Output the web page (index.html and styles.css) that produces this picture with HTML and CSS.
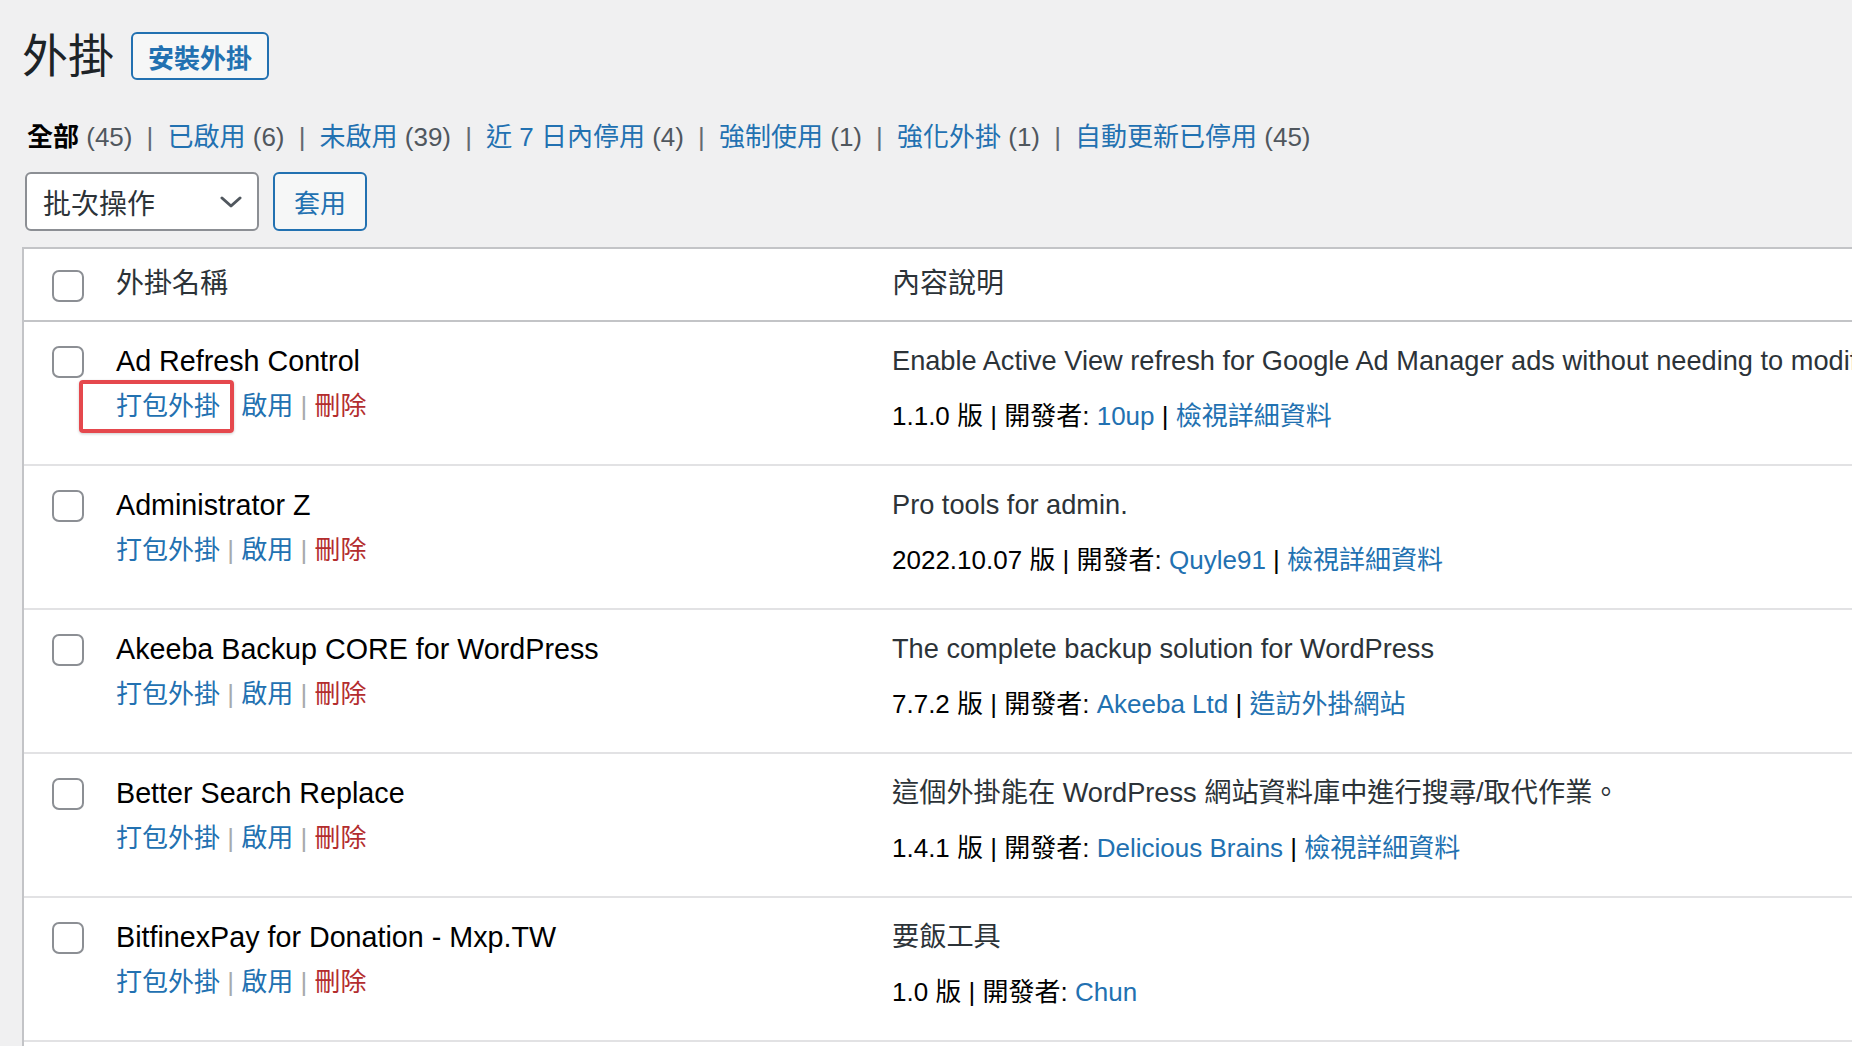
FILE: index.html
```html
<!DOCTYPE html>
<html lang="zh-Hant">
<head>
<meta charset="utf-8">
<title>外掛</title>
<link rel="stylesheet" href="styles.css">
</head>
<body>
<div class="wrap">
  <div class="heading">
    <h1 class="title">外掛</h1>
    <a class="title-action" href="#">安裝外掛</a>
  </div>

  <div class="filters">
    <span class="item"><b class="current">全部</b> <span class="count">(45)</span></span>
    <span class="sep">|</span>
    <span class="item"><a href="#">已啟用</a> <span class="count">(6)</span></span>
    <span class="sep">|</span>
    <span class="item"><a href="#">未啟用</a> <span class="count">(39)</span></span>
    <span class="sep">|</span>
    <span class="item"><a href="#">近 7 日內停用</a> <span class="count">(4)</span></span>
    <span class="sep">|</span>
    <span class="item"><a href="#">強制使用</a> <span class="count">(1)</span></span>
    <span class="sep">|</span>
    <span class="item"><a href="#">強化外掛</a> <span class="count">(1)</span></span>
    <span class="sep">|</span>
    <span class="item"><a href="#">自動更新已停用</a> <span class="count">(45)</span></span>
  </div>

  <div class="bulk">
    <div class="select">
      <span>批次操作</span>
      <svg class="chev" width="22" height="12" viewBox="0 0 22 12"><polyline points="2,2 11,10 20,2" fill="none" stroke="#50575e" stroke-width="3" stroke-linecap="round" stroke-linejoin="round"/></svg>
    </div>
    <button class="apply">套用</button>
  </div>

  <div class="table">
    <div class="row head">
      <div class="cb"><span class="box"></span></div>
      <div class="th">外掛名稱</div>
      <div class="th">內容說明</div>
    </div>

    <div class="row">
      <div class="cb"><span class="box"></span></div>
      <div class="name-cell">
        <div class="name">Ad Refresh Control</div>
        <div class="actions">
          <a href="#" class="act">打包外掛</a><span class="asep hidden"> | </span><a href="#" class="act">啟用</a><span class="asep"> | </span><a href="#" class="del">刪除</a>
          <span class="hl"></span>
        </div>
      </div>
      <div class="desc-cell">
        <div class="desc">Enable Active View refresh for Google Ad Manager ads without needing to modify any code.</div>
        <div class="meta">1.1.0 版 | 開發者: <a href="#">10up</a> | <a href="#">檢視詳細資料</a></div>
      </div>
    </div>

    <div class="row">
      <div class="cb"><span class="box"></span></div>
      <div class="name-cell">
        <div class="name">Administrator Z</div>
        <div class="actions">
          <a href="#" class="act">打包外掛</a><span class="asep"> | </span><a href="#" class="act">啟用</a><span class="asep"> | </span><a href="#" class="del">刪除</a>
        </div>
      </div>
      <div class="desc-cell">
        <div class="desc">Pro tools for admin.</div>
        <div class="meta">2022.10.07 版 | 開發者: <a href="#">Quyle91</a> | <a href="#">檢視詳細資料</a></div>
      </div>
    </div>

    <div class="row">
      <div class="cb"><span class="box"></span></div>
      <div class="name-cell">
        <div class="name">Akeeba Backup CORE for WordPress</div>
        <div class="actions">
          <a href="#" class="act">打包外掛</a><span class="asep"> | </span><a href="#" class="act">啟用</a><span class="asep"> | </span><a href="#" class="del">刪除</a>
        </div>
      </div>
      <div class="desc-cell">
        <div class="desc">The complete backup solution for WordPress</div>
        <div class="meta">7.7.2 版 | 開發者: <a href="#">Akeeba Ltd</a> | <a href="#">造訪外掛網站</a></div>
      </div>
    </div>

    <div class="row">
      <div class="cb"><span class="box"></span></div>
      <div class="name-cell">
        <div class="name">Better Search Replace</div>
        <div class="actions">
          <a href="#" class="act">打包外掛</a><span class="asep"> | </span><a href="#" class="act">啟用</a><span class="asep"> | </span><a href="#" class="del">刪除</a>
        </div>
      </div>
      <div class="desc-cell">
        <div class="desc">這個外掛能在 WordPress 網站資料庫中進行搜尋/取代作業。</div>
        <div class="meta">1.4.1 版 | 開發者: <a href="#">Delicious Brains</a> | <a href="#">檢視詳細資料</a></div>
      </div>
    </div>

    <div class="row">
      <div class="cb"><span class="box"></span></div>
      <div class="name-cell">
        <div class="name">BitfinexPay for Donation - Mxp.TW</div>
        <div class="actions">
          <a href="#" class="act">打包外掛</a><span class="asep"> | </span><a href="#" class="act">啟用</a><span class="asep"> | </span><a href="#" class="del">刪除</a>
        </div>
      </div>
      <div class="desc-cell">
        <div class="desc">要飯工具</div>
        <div class="meta">1.0 版 | 開發者: <a href="#">Chun</a></div>
      </div>
    </div>

    <div class="tail"></div>
  </div>
</div>
</body>
</html>
```

FILE: styles.css
```css
html, body {
  margin: 0;
  padding: 0;
}
body {
  background: #f0f0f1;
  font-family: "Liberation Sans", "Noto Sans CJK TC", sans-serif;
  color: #1d2327;
  overflow: hidden;
  width: 1852px;
  height: 1046px;
}
a {
  color: #2271b1;
  text-decoration: none;
}
.wrap {
  padding: 26px 0 0 22px;
}

/* heading */
.heading {
  display: flex;
  align-items: center;
  height: 60px;
}
.title {
  margin: 0;
  font-size: 46px;
  font-weight: 400;
  line-height: 60px;
  color: #1d2327;
}
.title-action {
  margin-left: 17px;
  height: 48px;
  box-sizing: border-box;
  display: flex;
  align-items: center;
  padding: 0 15px;
  border: 2px solid #2271b1;
  border-radius: 6px;
  background: #f6f7f7;
  color: #2271b1;
  font-size: 26px;
  font-weight: 700;
}

/* filters */
.filters {
  margin: 33px 0 0 5px;
  display: flex;
  align-items: baseline;
  white-space: nowrap;
  font-size: 26px;
  line-height: 36px;
}
.current {
  color: #000;
  font-weight: 700;
}
.count {
  color: #50575e;
}
.sep {
  display: inline-block;
  width: 35px;
  text-align: center;
  color: #646970;
}

/* bulk actions */
.bulk {
  margin: 17px 0 0 3px;
  display: flex;
  align-items: center;
}
.select {
  width: 234px;
  height: 59px;
  box-sizing: border-box;
  border: 2px solid #8c8f94;
  border-radius: 6px;
  background: #fff;
  display: flex;
  align-items: center;
  justify-content: space-between;
  padding: 0 15px 0 16px;
  font-size: 28px;
  color: #2c3338;
}
.apply {
  margin-left: 14px;
  width: 94px;
  height: 59px;
  box-sizing: border-box;
  border: 2px solid #2271b1;
  border-radius: 6px;
  background: #f6f7f7;
  color: #2271b1;
  font-family: "Liberation Sans", "Noto Sans CJK TC", sans-serif;
  font-size: 26px;
  padding: 0;
}

/* table */
.table {
  margin-top: 16px;
  width: 2400px;
  background: #fff;
  border-top: 2px solid #c3c4c7;
  border-left: 2px solid #c3c4c7;
}
.row {
  display: grid;
  grid-template-columns: 92px 776px 1fr;
  height: 144px;
  box-sizing: border-box;
  border-bottom: 2px solid #e2e2e4;
}
.row.head {
  height: 73px;
  border-bottom-color: #c3c4c7;
}
.cb {
  padding: 24px 0 0 28px;
}
.head .cb {
  padding-top: 21px;
}
.box {
  display: block;
  width: 32px;
  height: 32px;
  box-sizing: border-box;
  border: 2px solid #8c8f94;
  border-radius: 7px;
  background: #fff;
}
.th {
  padding-top: 15px;
  font-size: 28px;
  line-height: 40px;
  color: #2c3338;
}
.name-cell, .desc-cell {
  padding-top: 19px;
  white-space: nowrap;
}
.name {
  font-size: 28.7px;
  line-height: 40px;
  color: #000;
}
.actions {
  position: relative;
  margin-top: 5px;
  font-size: 26px;
  line-height: 40px;
  display: inline-block;
}
.asep {
  color: #a7aaad;
  white-space: pre;
}
.asep.hidden {
  visibility: hidden;
}
.del {
  color: #b32d2e;
}
.hl {
  position: absolute;
  left: -37px;
  top: -6px;
  width: 155px;
  height: 53px;
  box-sizing: border-box;
  border: 4px solid #e5484d;
  border-radius: 4px;
  box-shadow: 0 1px 3px rgba(0, 0, 0, 0.2);
}
.desc {
  font-size: 27.2px;
  line-height: 40px;
  color: #2c3338;
}
.meta {
  margin-top: 15px;
  font-size: 26px;
  line-height: 40px;
  color: #000;
}
.tail {
  height: 40px;
}
```
